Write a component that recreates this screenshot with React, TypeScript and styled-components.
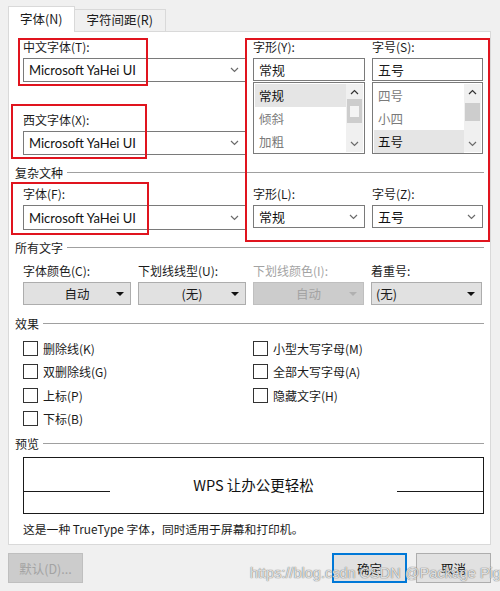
import React from 'react';
import styled, { createGlobalStyle, css } from 'styled-components';

const GlobalStyles = createGlobalStyle`
  html, body { margin: 0; padding: 0; background: #f0f0f0; }
  * { box-sizing: border-box; }
`;

const font = `"Noto Sans CJK SC", "Noto Sans", sans-serif`;

const Window = styled.div`
  position: relative;
  width: 500px;
  height: 591px;
  background: #f0f0f0;
  font-family: ${font};
  font-size: 12px;
  color: #1b1b1b;
  padding: 6px 9px 0 8px;
  overflow: hidden;
`;

const TabBar = styled.div`
  display: flex;
  align-items: flex-end;
  height: 25px;
`;

const Tab = styled.div<{ $active?: boolean }>`
  height: ${p => (p.$active ? 26 : 22)}px;
  padding: 0 ${p => (p.$active ? 11 : 12)}px;
  display: flex;
  align-items: center;
  border: 1px solid #d9d9d9;
  border-bottom: none;
  background: ${p => (p.$active ? '#fff' : '#f0f0f0')};
  margin-bottom: ${p => (p.$active ? -1 : 0)}px;
  position: relative;
  z-index: ${p => (p.$active ? 2 : 1)};
  font-size: 12.5px;
  line-height: 1;
  & + & { border-left: none; }
`;

const Panel = styled.div`
  background: #fff;
  border: 1px solid #d9d9d9;
  height: 514px;
  padding: 6px 6px 0 6px;
  position: relative;
`;

const Indent = styled.div`
  margin-left: 8px;
`;

const TopGrid = styled(Indent)`
  display: grid;
  grid-template-columns: 223px 230px;
  column-gap: 7px;
`;

const Column = styled.div<{ $gap?: number }>`
  display: flex;
  flex-direction: column;
  gap: ${p => p.$gap ?? 0}px;
`;

const Pair = styled.div`
  display: grid;
  grid-template-columns: 112px 111px;
  column-gap: 7px;
`;

const Label = styled.div<{ $disabled?: boolean }>`
  height: 18px;
  line-height: 18px;
  margin-bottom: 2px;
  white-space: nowrap;
  color: ${p => (p.$disabled ? '#a3a3a3' : '#1b1b1b')};
`;

const Combo = styled.div<{ $h?: number }>`
  height: ${p => p.$h ?? 24}px;
  border: 1px solid #7a7a7a;
  background: #fff;
  display: flex;
  align-items: center;
  justify-content: space-between;
  padding: 0 6px 0 5px;
  font-size: 13px;
`;

const ComboText = styled.span<{ $latin?: boolean }>`
  font-family: ${p => (p.$latin ? `Lato, "Noto Sans", sans-serif` : font)};
  font-size: ${p => (p.$latin ? 13 : 13)}px;
  color: #111;
`;

const Chevron = ({ up }: { up?: boolean }) => (
  <svg width="9" height="6" viewBox="0 0 9 6">
    <path
      d={up ? 'M1 5 L4.5 1.5 L8 5' : 'M1 1 L4.5 4.5 L8 1'}
      fill="none"
      stroke={up ? '#333' : '#6b6b6b'}
      strokeWidth="1.2"
    />
  </svg>
);

const Input = styled.div`
  height: 23px;
  border: 1px solid #7a7a7a;
  background: #fff;
  padding-left: 5px;
  display: flex;
  align-items: center;
  font-size: 13px;
`;

const ListBox = styled.div`
  margin-top: 1px;
  height: 72px;
  border: 1px solid #7a7a7a;
  background: #fff;
  display: flex;
  padding: 1px;
`;

const Items = styled.div`
  flex: 1;
  display: flex;
  flex-direction: column;
`;

const Item = styled.div<{ $selected?: boolean }>`
  height: 23px;
  line-height: 23px;
  padding-left: 4px;
  font-size: 12.5px;
  color: ${p => (p.$selected ? '#111' : '#7a7a7a')};
  background: ${p => (p.$selected ? '#e5e5e5' : 'transparent')};
`;

const ScrollBar = styled.div`
  width: 17px;
  background: #f0f0f0;
  display: flex;
  flex-direction: column;
  align-items: center;
  justify-content: space-between;
  padding: 5px 0;
`;

const Thumb = styled.div<{ $top: number; $h: number; $hollow?: boolean }>`
  width: 15px;
  height: ${p => p.$h}px;
  margin-top: ${p => p.$top}px;
  margin-bottom: auto;
  background: #cdcdcd;
  ${p =>
    p.$hollow &&
    css`
      display: flex;
      align-items: center;
      justify-content: center;
      &::after {
        content: '';
        width: 9px;
        height: 11px;
        background: #f4f4f4;
      }
    `}
`;

const SectionHead = styled.div<{ $mt: number }>`
  display: flex;
  align-items: center;
  height: 18px;
  margin-top: ${p => p.$mt}px;
  gap: 4px;
  &::after {
    content: '';
    flex: 1;
    height: 1px;
    background: #a0a0a0;
    margin-top: 1px;
  }
`;

const RowGrid = styled(Indent)<{ $mt: number }>`
  display: grid;
  grid-template-columns: 108px 108px 111px 111px;
  column-gap: 7px;
  margin-top: ${p => p.$mt}px;
`;

const DropButton = styled.div<{ $disabled?: boolean; $left?: boolean }>`
  height: 23px;
  border: 1px solid ${p => (p.$disabled ? '#bfbfbf' : '#adadad')};
  background: ${p => (p.$disabled ? '#cccccc' : '#e1e1e1')};
  color: ${p => (p.$disabled ? '#a3a3a3' : '#1b1b1b')};
  display: flex;
  align-items: center;
  position: relative;
  font-size: 12.5px;
  padding: 0 ${p => (p.$left ? 20 : 0)}px 0 ${p => (p.$left ? 4 : 0)}px;
  justify-content: ${p => (p.$left ? 'flex-start' : 'center')};
  &::after {
    content: '';
    position: absolute;
    right: 6px;
    top: 9px;
    border-left: 4px solid transparent;
    border-right: 4px solid transparent;
    border-top: 4px solid ${p => (p.$disabled ? '#b0b0b0' : '#111')};
  }
`;

const CheckGrid = styled(Indent)`
  display: grid;
  grid-template-columns: 230px 230px;
  grid-auto-rows: 23.3px;
  margin-top: 5px;
`;

const Check = styled.label`
  display: flex;
  align-items: center;
  gap: 5px;
  font-size: 12px;
  &::before {
    content: '';
    width: 13px;
    height: 13px;
    border: 1px solid #333;
    background: #fff;
  }
`;

const Preview = styled(Indent)`
  margin-top: 5px;
  height: 57px;
  border: 1.6px solid #1a1a1a;
  display: flex;
  align-items: flex-start;
  justify-content: space-between;
  padding-top: 17px;
`;

const PreviewLine = styled.div`
  width: 86px;
  height: 0;
  border-top: 1.5px solid #1a1a1a;
  margin-top: 16px;
`;

const PreviewText = styled.div`
  font-size: 14.5px;
  line-height: 20px;
  color: #111;
`;

const Note = styled(Indent)`
  margin-top: 6px;
  height: 18px;
  line-height: 18px;
  font-size: 11.8px;
`;

const Footer = styled.div`
  display: flex;
  align-items: center;
  margin-top: 8px;
  margin-left: 0;
`;

const Button = styled.div<{ $disabled?: boolean; $primary?: boolean; $ml?: number }>`
  width: 75px;
  height: 30px;
  display: flex;
  align-items: center;
  justify-content: center;
  font-size: 12.5px;
  margin-left: ${p => p.$ml ?? 0}px;
  background: ${p => (p.$disabled ? '#cccccc' : '#e1e1e1')};
  color: ${p => (p.$disabled ? '#a3a3a3' : '#1b1b1b')};
  border: ${p => (p.$primary ? '2px solid #0078d7' : `1px solid ${p.$disabled ? '#bfbfbf' : '#adadad'}`)};
`;

const RedMark = styled.div`
  position: absolute;
  border: 2px solid #e0141e;
  pointer-events: none;
  z-index: 5;
`;

const Watermark = styled.div`
  position: absolute;
  left: 250px;
  top: 563px;
  font-family: "Liberation Sans", Arial, sans-serif;
  font-size: 14.5px;
  line-height: 20px;
  color: rgba(255, 255, 255, 0.8);
  text-shadow: 0 0 1px rgba(90, 90, 90, 0.9), 0 0 1px rgba(90, 90, 90, 0.6);
  white-space: nowrap;
  z-index: 6;
  pointer-events: none;
`;

const ComboBox = ({ text, latin, h }: { text: string; latin?: boolean; h?: number }) => (
  <Combo $h={h}>
    <ComboText $latin={latin}>{text}</ComboText>
    <Chevron />
  </Combo>
);

const StyleList = ({
  label,
  value,
  items,
  selected,
  thumb,
}: {
  label: string;
  value: string;
  items: string[];
  selected: number;
  thumb: { top: number; h: number; hollow?: boolean };
}) => (
  <div>
    <Label>{label}</Label>
    <Input>{value}</Input>
    <ListBox>
      <Items>
        {items.map((it, i) => (
          <Item key={it} $selected={i === selected}>
            {it}
          </Item>
        ))}
      </Items>
      <ScrollBar>
        <Chevron up />
        <Thumb $top={thumb.top} $h={thumb.h} $hollow={thumb.hollow} />
        <Chevron />
      </ScrollBar>
    </ListBox>
  </div>
);

export default function App() {
  return (
    <Window>
      <GlobalStyles />
      <TabBar>
        <Tab $active>字体(N)</Tab>
        <Tab>字符间距(R)</Tab>
      </TabBar>

      <Panel>
        <TopGrid>
          <Column $gap={29}>
            <div>
              <Label>中文字体(T):</Label>
              <ComboBox text="Microsoft YaHei UI" latin />
            </div>
            <div>
              <Label>西文字体(X):</Label>
              <ComboBox text="Microsoft YaHei UI" latin />
            </div>
          </Column>
          <Pair>
            <StyleList
              label="字形(Y):"
              value="常规"
              items={['常规', '倾斜', '加粗']}
              selected={0}
              thumb={{ top: 4, h: 24, hollow: true }}
            />
            <StyleList
              label="字号(S):"
              value="五号"
              items={['四号', '小四', '五号']}
              selected={2}
              thumb={{ top: 8, h: 18 }}
            />
          </Pair>
        </TopGrid>

        <SectionHead $mt={8}>复杂文种</SectionHead>

        <TopGrid style={{ marginTop: 4 }}>
          <div>
            <Label>字体(F):</Label>
            <ComboBox text="Microsoft YaHei UI" latin h={25} />
          </div>
          <Pair>
            <div>
              <Label>字形(L):</Label>
              <ComboBox text="常规" h={23} />
            </div>
            <div>
              <Label>字号(Z):</Label>
              <ComboBox text="五号" h={23} />
            </div>
          </Pair>
        </TopGrid>

        <SectionHead $mt={8}>所有文字</SectionHead>

        <RowGrid $mt={6}>
          <div>
            <Label>字体颜色(C):</Label>
            <DropButton>自动</DropButton>
          </div>
          <div>
            <Label>下划线线型(U):</Label>
            <DropButton>(无)</DropButton>
          </div>
          <div>
            <Label $disabled>下划线颜色(I):</Label>
            <DropButton $disabled>自动</DropButton>
          </div>
          <div>
            <Label>着重号:</Label>
            <DropButton $left>(无)</DropButton>
          </div>
        </RowGrid>

        <SectionHead $mt={9}>效果</SectionHead>

        <CheckGrid>
          <Check>删除线(K)</Check>
          <Check>小型大写字母(M)</Check>
          <Check>双删除线(G)</Check>
          <Check>全部大写字母(A)</Check>
          <Check>上标(P)</Check>
          <Check>隐藏文字(H)</Check>
          <Check>下标(B)</Check>
        </CheckGrid>

        <SectionHead $mt={4}>预览</SectionHead>

        <Preview>
          <PreviewLine />
          <PreviewText>WPS 让办公更轻松</PreviewText>
          <PreviewLine />
        </Preview>

        <Note>这是一种 TrueType 字体，同时适用于屏幕和打印机。</Note>

        <RedMark style={{ left: 9, top: 6, width: 130, height: 48 }} />
        <RedMark style={{ left: 2, top: 72, width: 136, height: 55 }} />
        <RedMark style={{ left: 2, top: 150, width: 138, height: 53 }} />
        <RedMark style={{ left: 236, top: 6, width: 245, height: 204 }} />
      </Panel>

      <Footer>
        <Button $disabled>默认(D)...</Button>
        <Button $primary $ml={249}>确定</Button>
        <Button $ml={9}>取消</Button>
      </Footer>

      <Watermark>https://blog.csdn CSDN @Package Pig</Watermark>
    </Window>
  );
}
